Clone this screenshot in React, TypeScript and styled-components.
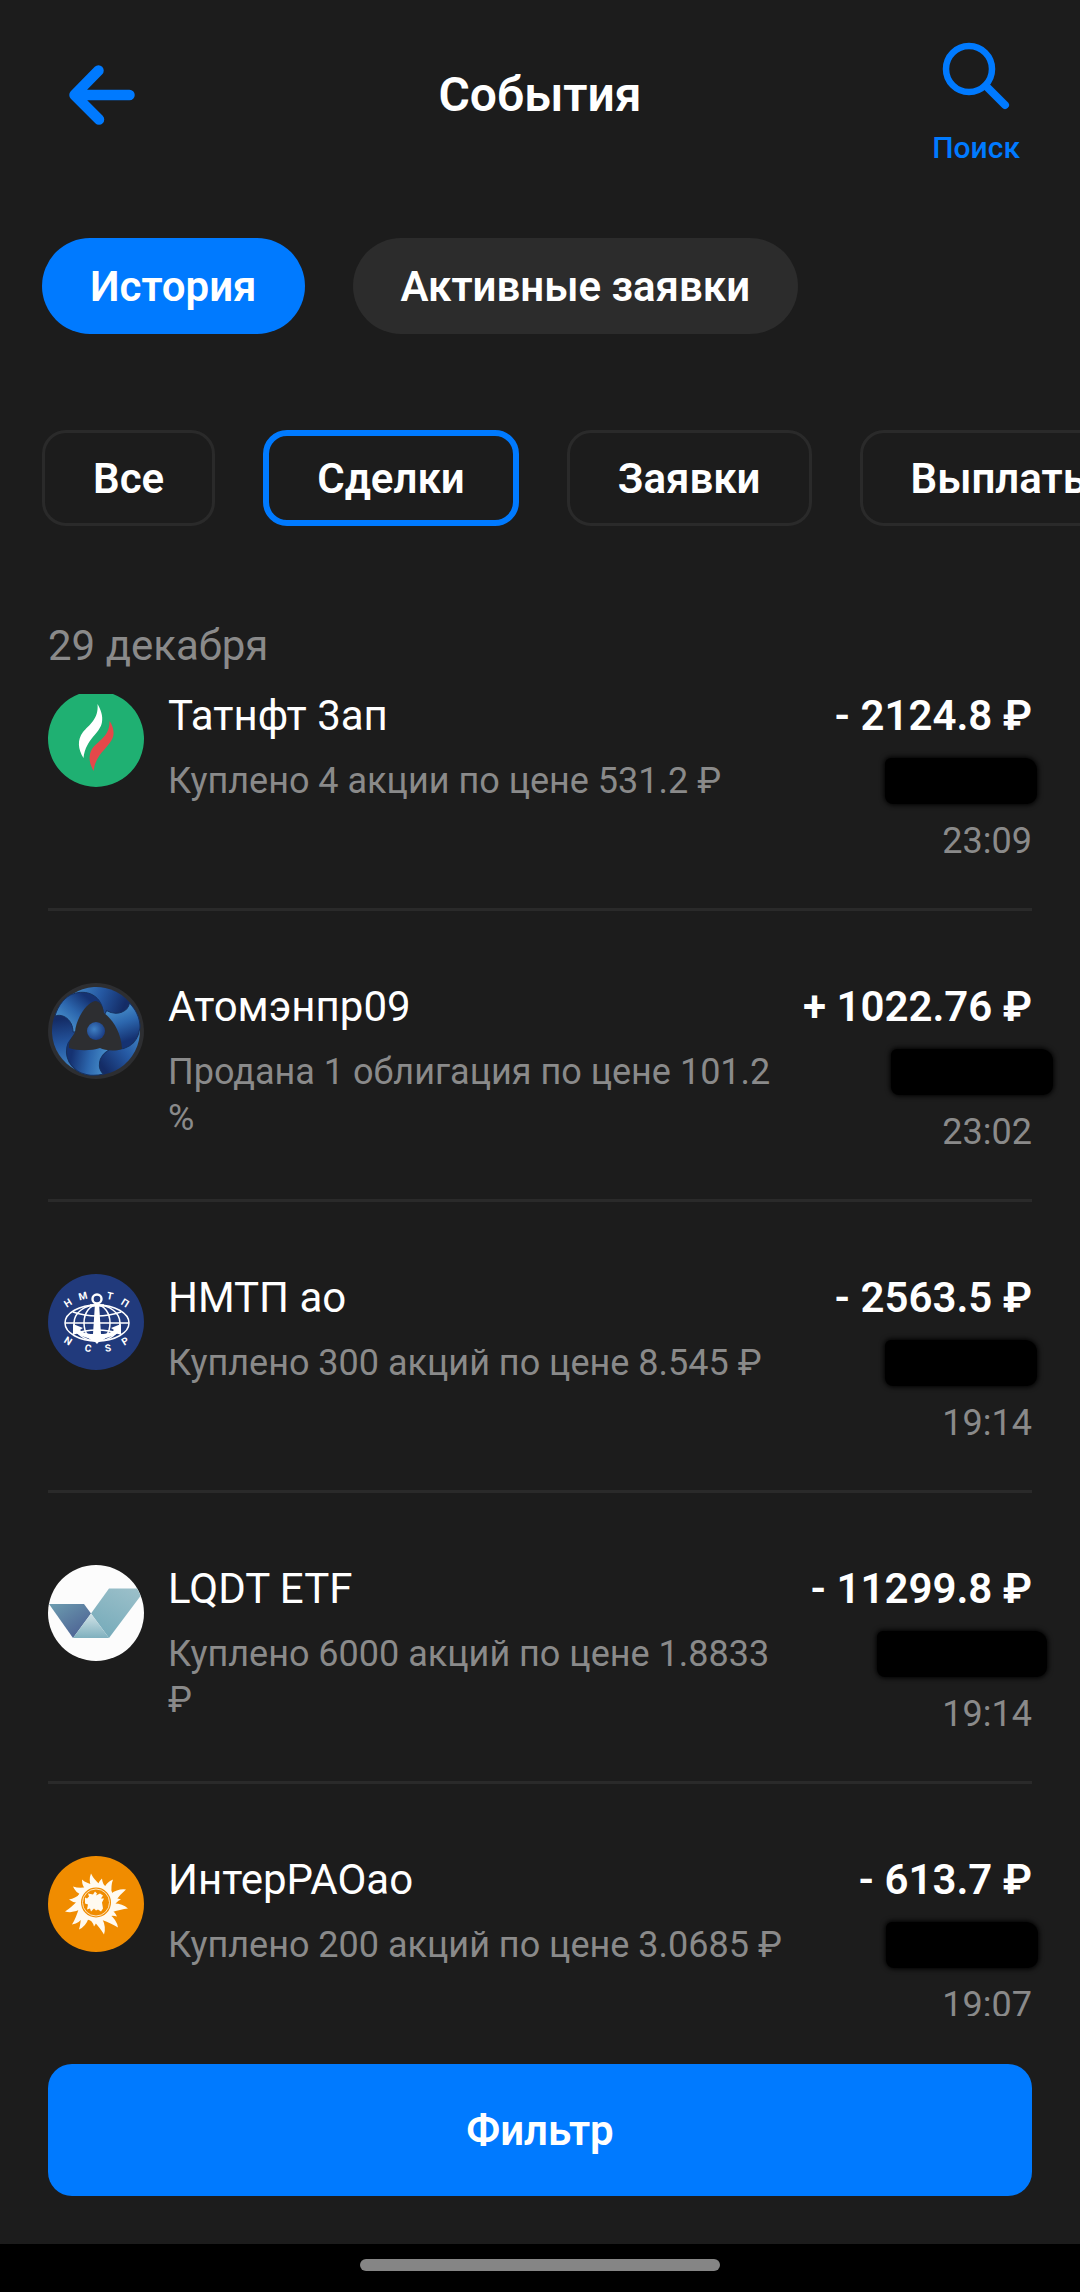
import React from 'react';
import styled, { createGlobalStyle } from 'styled-components';

const GlobalStyle = createGlobalStyle`
  * {
    box-sizing: border-box;
  }

  body {
    margin: 0;
    background: #1c1c1c;
    color: #ffffff;
    font-family: Roboto, 'Noto Sans', sans-serif;
  }

  button {
    margin: 0;
    padding: 0;
    border: none;
    background: none;
    color: inherit;
    font: inherit;
    cursor: pointer;
  }
`;

const Screen = styled.div`
  display: flex;
  flex-direction: column;
  height: 100vh;
  overflow: hidden;
`;

const Header = styled.header`
  display: grid;
  grid-template-columns: 1fr auto 1fr;
  align-items: center;
  padding: 36px 60px 0;
`;

const BackButton = styled.button`
  justify-self: start;
  display: flex;
  margin-bottom: 12px;
`;

const Title = styled.h1`
  margin: 0 0 12px;
  font-size: 48px;
  line-height: 56px;
  font-weight: 600;
`;

const SearchButton = styled.button`
  justify-self: end;
  display: flex;
  flex-direction: column;
  align-items: center;
  gap: 18px;
  color: #007aff;
  font-size: 30px;
  line-height: 36px;
  font-weight: 500;
`;

const Tabs = styled.nav`
  display: flex;
  gap: 48px;
  padding: 72px 42px 0;
`;

const Tab = styled.button<{ $active?: boolean }>`
  height: 96px;
  padding: 0 48px;
  border-radius: 48px;
  background: ${props => (props.$active ? '#007aff' : '#2c2c2c')};
  font-size: 42px;
  font-weight: 600;
  white-space: nowrap;
`;

const Chips = styled.div`
  display: flex;
  gap: 48px;
  padding: 96px 42px 0;
  overflow: hidden;
`;

const Chip = styled.button<{ $active?: boolean }>`
  flex: none;
  height: 96px;
  padding: 0 48px;
  border: ${props => (props.$active ? '6px solid #007aff' : '3px solid #2a2a2a')};
  border-radius: 24px;
  font-size: 42px;
  font-weight: 600;
`;

const DateLabel = styled.h2`
  margin: 0;
  padding: 96px 48px 0;
  color: #8a8a8a;
  font-size: 42px;
  line-height: 48px;
  font-weight: 400;
`;

const List = styled.ul`
  flex: 1;
  min-height: 0;
  margin: 22px 0 0;
  padding: 0 48px;
  list-style: none;
  overflow: hidden;
`;

const Row = styled.li`
  display: flex;
  gap: 24px;
  height: 291px;
  padding-top: 72px;
  border-bottom: 3px solid #2a2a2a;

  &:first-child {
    height: 219px;
    padding-top: 0;
  }
`;

const Logo = styled.svg`
  flex: none;
  width: 96px;
  height: 96px;
`;

const Details = styled.div`
  flex: 1;
  min-width: 0;
`;

const Name = styled.div`
  font-size: 42px;
  line-height: 48px;
`;

const Note = styled.div`
  margin-top: 18px;
  color: #8a8a8a;
  font-size: 36px;
  line-height: 46px;
`;

const Sums = styled.div`
  display: flex;
  flex-direction: column;
  align-items: flex-end;
`;

const Amount = styled.div`
  font-size: 42px;
  line-height: 48px;
  font-weight: 600;
  white-space: nowrap;
`;

const HiddenBalance = styled.div<{ $width: number; $overhang: number }>`
  width: ${props => props.$width}px;
  height: 46px;
  margin: 18px -${props => props.$overhang}px 0 0;
  border-radius: 6px 12px 10px 8px;
  background: #000000;
  box-shadow: 0 0 5px 1px #000000;
`;

const Time = styled.time`
  margin-top: 14px;
  color: #8a8a8a;
  font-size: 36px;
  line-height: 46px;
`;

const Footer = styled.footer`
  padding: 48px;
`;

const FilterButton = styled.button`
  width: 100%;
  height: 132px;
  border-radius: 24px;
  background: #007aff;
  font-size: 42px;
  font-weight: 600;
`;

const SystemBar = styled.div`
  display: flex;
  justify-content: center;
  align-items: center;
  height: 48px;
  padding-bottom: 6px;
  background: #000000;

  &::before {
    content: '';
    width: calc(100% / 3);
    height: 12px;
    border-radius: 6px;
    background: #858585;
  }
`;

const RingLetter = styled.text`
  fill: #ffffff;
  font-size: 10px;
  font-weight: 700;
  text-anchor: middle;
`;

const BackIcon = () => (
  <svg width="84" height="68" viewBox="0 0 84 68" fill="none" stroke="#007aff" strokeWidth="10.5" strokeLinecap="round" strokeLinejoin="round">
    <path d="M38.500 9.500 14.500 34l24.500 24.500M16 34h53.500" />
  </svg>
);

const SearchIcon = () => (
  <svg width="72" height="76" viewBox="0 0 72 76" fill="none" stroke="#007aff" strokeLinecap="round">
    <circle cx="29" cy="33" r="23" strokeWidth="6.5" />
    <path d="M46 50 65 69" strokeWidth="8" />
  </svg>
);

const TatneftLogo = () => (
  <Logo viewBox="0 0 96 96">
    <path d="M31 2H65A48 48 0 1 1 31 2Z" fill="#1fb072" />
    <path d="M49.500 12C53 18 55 24 54 30C52 42 38 46 35.500 66C30 57 29 48 35 40C41 33 51 27 49.500 12Z" fill="#ffffff" />
    <path d="M61.500 29C65 34 66.500 40 65 45C62 55 47 62 45.700 79C40 70 41 62 44 57C49 49 62 45 61.500 29Z" fill="#e5484a" />
  </Logo>
);

const AtomLogo = () => (
  <Logo viewBox="-48 -48 96 96">
    <defs>
      <linearGradient id="atomLow" gradientUnits="userSpaceOnUse" x1="-22" y1="-40" x2="26" y2="-20">
        <stop offset="0" stopColor="#4287c6" />
        <stop offset="0.5" stopColor="#2558a2" />
        <stop offset="1" stopColor="#142c66" />
      </linearGradient>
      <linearGradient id="atomHigh" gradientUnits="userSpaceOnUse" x1="-36" y1="-8" x2="-12" y2="-36">
        <stop offset="0" stopColor="#4a92cd" />
        <stop offset="0.5" stopColor="#2c66ad" />
        <stop offset="1" stopColor="#153272" />
      </linearGradient>
      <radialGradient id="atomCore" cx="0.4" cy="0.4" r="0.6">
        <stop offset="0" stopColor="#3f80c4" />
        <stop offset="1" stopColor="#1c3f86" />
      </radialGradient>
    </defs>
    <circle r="48" fill="#2d2e31" />
    {[0, 120, 240].map(angle => (
      <path key={angle} transform={`rotate(${angle})`} d="M0 0L-39 -20A44 44 0 0 1 37 -24Z" fill="url(#atomLow)" />
    ))}
    {[0, 120, 240].map(angle => (
      <path
        key={angle}
        transform={`rotate(${angle})`}
        d="M-41 -15C-33 -18 -23 -11 -23 1L0 0L7 -20C5 -36 -10 -42 -23 -37C-30 -35 -38 -26 -41 -15Z"
        fill="url(#atomHigh)"
        stroke="#16305f"
        strokeWidth="1"
      />
    ))}
    <path d="M-1 -30C4 -30 7 -25 8 -18C16 -12 25 0 26 18C18 21 8 19 4 17C-5 20 -18 20 -27 17C-28 10 -23 5 -21 1C-20 -12 -10 -28 -1 -30Z" fill="#2d2e31" />
    <circle r="9" fill="url(#atomCore)" />
  </Logo>
);

const ringLetters = [
  { char: 'Н', x: 20, y: 29, turn: -32 },
  { char: 'М', x: 35, y: 22, turn: -14 },
  { char: 'Т', x: 62, y: 22, turn: 12 },
  { char: 'П', x: 77, y: 29, turn: 32 },
  { char: 'N', x: 20, y: 67, turn: 32 },
  { char: 'C', x: 40, y: 74, turn: 10 },
  { char: 'S', x: 60, y: 74, turn: -10 },
  { char: 'P', x: 77, y: 67, turn: -32 },
];

const PortLogo = () => (
  <Logo viewBox="0 0 96 96">
    <circle cx="48" cy="48" r="48" fill="#213a7c" />
    <g fill="none" stroke="#ffffff" strokeWidth="1.5">
      <ellipse cx="49" cy="49" rx="32" ry="18" />
      <ellipse cx="49" cy="49" rx="23" ry="18" />
      <ellipse cx="49" cy="49" rx="13" ry="18" />
      <path d="M17 49H81M25 38Q49 46 73 38M25 60Q49 52 73 60" />
    </g>
    <circle cx="49" cy="25" r="4.500" fill="none" stroke="#ffffff" strokeWidth="2.4" />
    <path d="M47 29H51L53 60C59 60 64 58 66 56L63 54L73 50V61L70 59C64 64 54 63 49 70C44 63 34 64 28 59L25 61V50L35 54L32 56C34 58 39 60 45 60Z" fill="#ffffff" />
    <path d="M42 31.500H56" stroke="#ffffff" strokeWidth="2.4" />
    {ringLetters.map(({ char, x, y, turn }) => (
      <RingLetter key={char} transform={`translate(${x} ${y}) rotate(${turn})`} dy="3.5">
        {char}
      </RingLetter>
    ))}
  </Logo>
);

const LiquidityLogo = () => (
  <Logo viewBox="0 0 96 96">
    <defs>
      <linearGradient id="lqLeft" x1="0" y1="0" x2="0.8" y2="1">
        <stop offset="0" stopColor="#6d9db0" />
        <stop offset="1" stopColor="#4b5f92" />
      </linearGradient>
      <linearGradient id="lqRight" x1="0.8" y1="0" x2="0.3" y2="1">
        <stop offset="0" stopColor="#9abfc9" />
        <stop offset="1" stopColor="#76abba" />
      </linearGradient>
      <linearGradient id="lqBase" x1="0" y1="0" x2="0" y2="1">
        <stop offset="0" stopColor="#d3e4e8" />
        <stop offset="1" stopColor="#7fb0be" />
      </linearGradient>
    </defs>
    <circle cx="48" cy="48" r="48" fill="#fcfcfc" />
    <path d="M1 39H36L43 48.500L25 73Z" fill="url(#lqLeft)" />
    <path d="M61 23.500H89C91 27 92 29 92.500 31L61 73L43 48.500Z" fill="url(#lqRight)" />
    <path d="M43 48.500L61 73H25Z" fill="url(#lqBase)" />
  </Logo>
);

// tips of the sun rays, relative to the centre of the globe
const rayTips = [
  [-5, -29], [6, -24], [17, -23], [30, -13], [25, -3], [32, 6], [21, 14], [22, 25],
  [8, 32], [-2, 24], [-17, 27], [-24, 22], [-31, 9], [-27, -3], [-23, -16], [-14, -23],
];

const rayPath = ([x, y]: number[]) => {
  const angle = Math.atan2(y, x);
  const length = Math.hypot(x, y);
  const point = (turn: number, radius: number) =>
    `${(Math.cos(angle + turn) * radius).toFixed(1)} ${(Math.sin(angle + turn) * radius).toFixed(1)}`;
  return `M${point(-0.12, 17)}Q${point(-0.16, length * 0.8)} ${x} ${y}Q${point(0.08, length * 0.78)} ${point(0.42, 18)}Z`;
};

const InterRaoLogo = () => (
  <Logo viewBox="0 0 96 96">
    <circle cx="48" cy="48" r="48" fill="#f08c00" />
    <g transform="translate(48 46.5)" fill="#fffaf0">
      <circle r="19" />
      {rayTips.map((tip, index) => (
        <path key={index} d={rayPath(tip)} />
      ))}
      <circle r="15" fill="#f08c00" />
      <circle r="13.500" fill="none" stroke="#fffaf0" strokeWidth="0.8" />
      <path d="M-11 -5L-9 -4L-7 -6L-8 -9L-3 -8L-1 -11L1 -9L0 -7L4 -9L7 -7L5 -4L8 -4L6 0L7 6L5 9L2 7L0 8L-2 6L-5 9L-6 6L-9 7L-8 2L-11 1Z" />
    </g>
  </Logo>
);

interface Deal {
  name: string;
  note: string;
  amount: string;
  time: string;
  hidden: { width: number; overhang: number };
  logo: React.FC;
}

const deals: Deal[] = [
  { name: 'Татнфт 3ап', note: 'Куплено 4 акции по цене 531.2 ₽', amount: '- 2124.8 ₽', time: '23:09', hidden: { width: 152, overhang: 5 }, logo: TatneftLogo },
  { name: 'Атомэнпр09', note: 'Продана 1 облигация по цене 101.2 %', amount: '+ 1022.76 ₽', time: '23:02', hidden: { width: 162, overhang: 21 }, logo: AtomLogo },
  { name: 'НМТП ао', note: 'Куплено 300 акций по цене 8.545 ₽', amount: '- 2563.5 ₽', time: '19:14', hidden: { width: 152, overhang: 5 }, logo: PortLogo },
  { name: 'LQDT ETF', note: 'Куплено 6000 акций по цене 1.8833 ₽', amount: '- 11299.8 ₽', time: '19:14', hidden: { width: 170, overhang: 15 }, logo: LiquidityLogo },
  { name: 'ИнтерРАОао', note: 'Куплено 200 акций по цене 3.0685 ₽', amount: '- 613.7 ₽', time: '19:07', hidden: { width: 152, overhang: 6 }, logo: InterRaoLogo },
];

const tabs = ['История', 'Активные заявки'];
const filters = ['Все', 'Сделки', 'Заявки', 'Выплаты'];

const App: React.FC = () => {
  const [tab, setTab] = React.useState('История');
  const [filter, setFilter] = React.useState('Сделки');

  return (
    <Screen>
      <GlobalStyle />
      <Header>
        <BackButton aria-label="Назад">
          <BackIcon />
        </BackButton>
        <Title>События</Title>
        <SearchButton>
          <SearchIcon />
          Поиск
        </SearchButton>
      </Header>

      <Tabs>
        {tabs.map(label => (
          <Tab key={label} $active={label === tab} onClick={() => setTab(label)}>
            {label}
          </Tab>
        ))}
      </Tabs>

      <Chips>
        {filters.map(label => (
          <Chip key={label} $active={label === filter} onClick={() => setFilter(label)}>
            {label}
          </Chip>
        ))}
      </Chips>

      <DateLabel>29 декабря</DateLabel>
      <List>
        {deals.map(deal => (
          <Row key={deal.name}>
            <deal.logo />
            <Details>
              <Name>{deal.name}</Name>
              <Note>{deal.note}</Note>
            </Details>
            <Sums>
              <Amount>{deal.amount}</Amount>
              <HiddenBalance $width={deal.hidden.width} $overhang={deal.hidden.overhang} />
              <Time>{deal.time}</Time>
            </Sums>
          </Row>
        ))}
      </List>

      <Footer>
        <FilterButton>Фильтр</FilterButton>
      </Footer>
      <SystemBar />
    </Screen>
  );
};

export default App;
